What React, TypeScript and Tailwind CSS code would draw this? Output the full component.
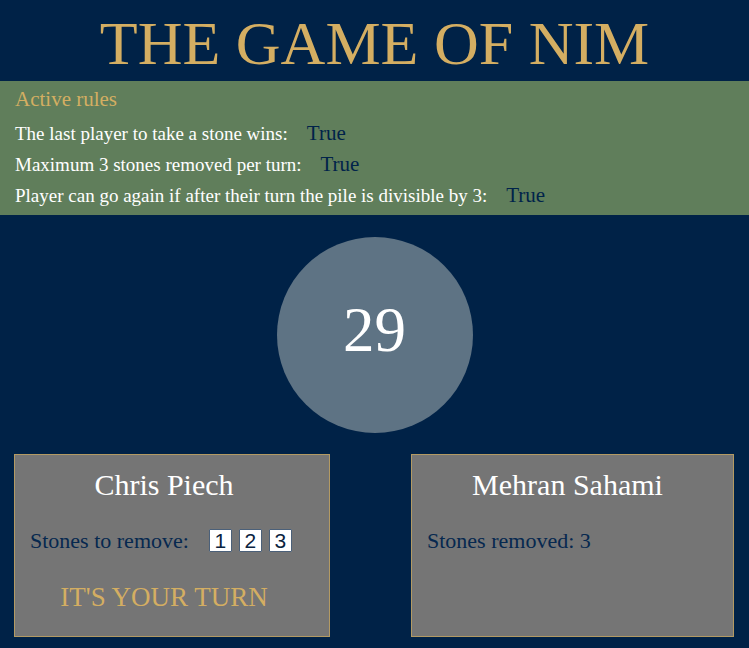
import React from "react";

const rules = [
  { label: "The last player to take a stone wins:", value: "True" },
  { label: "Maximum 3 stones removed per turn:", value: "True" },
  { label: "Player can go again if after their turn the pile is divisible by 3:", value: "True" }
];

export default function App() {
  return (
    <div className="w-[749px] h-[648px] bg-[#002247] flex flex-col font-['Liberation_Serif',serif] overflow-hidden">
      {/* Title */}
      <div className="h-[81px] flex items-center justify-center">
        <h1 className="text-[62px] leading-none text-[#d4ae62] pt-[4px]">THE GAME OF NIM</h1>
      </div>

      {/* Rules */}
      <div className="h-[134px] bg-[#607e5b] px-[15px] pt-[6px]">
        <div className="text-[21px] text-[#d4ae62] leading-[24px]">Active rules</div>
        <div className="flex flex-col gap-[6px] mt-[10px]">
          {rules.map((r) => (
            <div key={r.label} className="flex items-baseline text-[19px] leading-[24px] text-white">
              <span>{r.label}</span>
              <span className="ml-[19px] text-[21px] text-[#00234a]">{r.value}</span>
            </div>
          ))}
        </div>
      </div>

      {/* Pile */}
      <div className="flex justify-center pt-[22px]">
        <div className="w-[196px] h-[196px] rounded-full bg-[#5e7384] flex items-center justify-center">
          <span className="text-[63px] text-white leading-none mb-[10px]">29</span>
        </div>
      </div>

      {/* Players */}
      <div className="flex justify-between pl-[14px] pr-[15px] pt-[21px]">
        <div className="w-[316px] h-[183px] bg-[#757575] border border-[#b39a63] flex flex-col items-center pr-[16px]">
          <div className="text-[30px] text-white leading-none mt-[15px]">Chris Piech</div>
          <div className="self-start flex items-center ml-[15px] mt-[24px]">
            <span className="text-[22px] text-[#06284f]">Stones to remove:</span>
            <div className="flex gap-[7px] ml-[20px]">
              {[1, 2, 3].map((n) => (
                <button
                  key={n}
                  className="w-[23px] h-[23px] bg-white border border-[#4b6079] rounded-[1px] text-[21px] leading-none text-[#0b2340] font-['Liberation_Sans',sans-serif] flex items-center justify-center"
                >
                  {n}
                </button>
              ))}
            </div>
          </div>
          <div className="text-[27px] text-[#d4ae62] leading-none mt-[27px]">IT'S YOUR TURN</div>
        </div>

        <div className="w-[323px] h-[183px] bg-[#757575] border border-[#b39a63] flex flex-col items-center pr-[10px]">
          <div className="text-[30px] text-white leading-none mt-[15px]">Mehran Sahami</div>
          <div className="self-start ml-[15px] mt-[24px] text-[22px] text-[#06284f]">Stones removed: 3</div>
        </div>
      </div>
    </div>
  );
}
